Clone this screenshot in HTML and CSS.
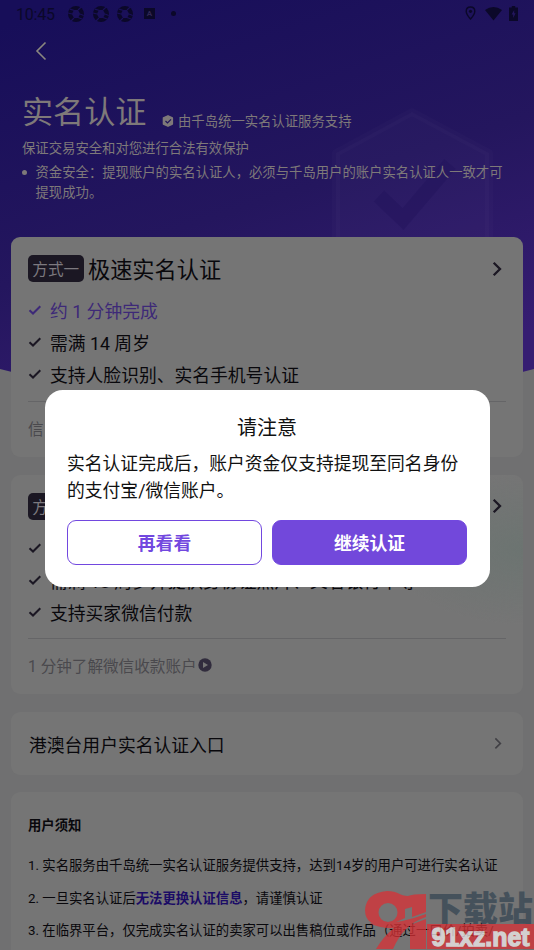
FILE: index.html
```html
<!DOCTYPE html>
<html lang="zh-CN">
<head>
<meta charset="utf-8">
<title>实名认证</title>
<link rel="stylesheet" href="styles.css">
</head>
<body>
<svg class="symbols" aria-hidden="true">
  <symbol id="check" viewBox="0 0 14 12"><path d="M1.5 6.2 5 9.5 12.3 2.3"/></symbol>
  <symbol id="next" viewBox="0 0 10 16"><path d="M1.7 1.7 8 8 1.7 14.3"/></symbol>
  <symbol id="aperture" viewBox="0 0 16 16"><circle cx="8" cy="8" r="8" fill="currentColor"/><path d="M6 4H10L12.2 8 10 12H6L3.8 8Z" fill="#1a1059"/><path d="M6.5 4.5 2 3.2M10 4 13.5 .8M12 8 15.8 9.5M10 11.5 14 13M6 12 3 15M4 8 0 7" stroke="#1a1059" stroke-width="1.2"/></symbol>
</svg>
<div class="screen">
  <svg class="backdrop" viewBox="0 0 534 410" aria-hidden="true">
    <defs><linearGradient id="sky" gradientUnits="userSpaceOnUse" x1="80" y1="0" x2="220" y2="430"><stop offset="0" stop-color="#170e59"/><stop offset=".55" stop-color="#24165e"/><stop offset="1" stop-color="#361d72"/></linearGradient></defs>
    <path fill="url(#sky)" d="M0 0H534V369Q267 440 0 369Z"/>
    <path d="M412 112 489 153V245H336V153Z" fill="#fff" fill-opacity=".018" stroke="#fff" stroke-opacity=".015" stroke-width="8" stroke-linejoin="round"/>
    <path d="m379 196 24 23 47-55" fill="none" stroke="#20125b" stroke-opacity=".4" stroke-width="15"/>
  </svg>
  <header class="status">
    <span class="clock">10:45</span>
    <svg class="ap"><use href="#aperture"/></svg><svg class="ap"><use href="#aperture"/></svg><svg class="ap"><use href="#aperture"/></svg>
    <span class="square">A</span><span class="dot"></span>
    <span class="system">
      <svg width="11" height="15" viewBox="0 0 11 15"><path d="M5.5 1C3 1 1.2 2.8 1.2 5.2 1.2 8.2 5.5 13 5.5 13S9.8 8.2 9.8 5.2C9.8 2.8 8 1 5.5 1Z" fill="none" stroke="currentColor" stroke-width="1.4"/><circle cx="5.5" cy="5.3" r="1.6" fill="currentColor"/></svg>
      <svg width="17" height="14" viewBox="0 0 17 14"><path d="M0 3Q8.5-3 17 3L8.5 13.5Z" fill="currentColor"/></svg>
      <svg width="9" height="15" viewBox="0 0 9 15"><path d="M2.8 0H6.2V1.5H9V15H0V1.5H2.8Z" fill="currentColor"/><path d="M5.2 4 2.6 8.6H4.2V12L6.6 7.3H5.2Z" fill="#24165e"/></svg>
    </span>
  </header>
  <nav class="nav"><svg width="12" height="20" viewBox="0 0 12 20"><path d="M10.5 1.5 2 10 10.5 18.5" fill="none" stroke="currentColor" stroke-width="1.6"/></svg></nav>
  <section class="intro">
    <div class="heading"><h1>实名认证</h1>
      <svg width="12" height="12" viewBox="0 0 12 12"><path d="M6 .8 10.4 3V9L6 11.2 1.4 9V3Z" fill="currentColor" stroke="currentColor" stroke-width="1.4" stroke-linejoin="round"/><path d="m3.5 6 2 2 3.5-3.6" fill="none" stroke="#1e1259" stroke-width="1.2"/></svg>
      <span>由千岛统一实名认证服务支持</span></div>
    <p>保证交易安全和对您进行合法有效保护</p>
    <ul><li>资金安全：提现账户的实名认证人，必须与千岛用户的账户实名认证人一致才可提现成功。</li></ul>
  </section>
  <main class="cards">
    <section class="card method">
      <div class="method-head"><span class="badge">方式一</span><h2>极速实名认证</h2><svg class="next"><use href="#next"/></svg></div>
      <ul class="checks">
        <li class="accent"><svg><use href="#check"/></svg>约 1 分钟完成</li>
        <li><svg><use href="#check"/></svg>需满 14 周岁</li>
        <li><svg><use href="#check"/></svg>支持人脸识别、实名手机号认证</li>
      </ul>
      <div class="foot">信</div>
    </section>
    <section class="card method wechat">
      <div class="method-head"><span class="badge">方式二</span><svg class="next"><use href="#next"/></svg></div>
      <ul class="checks">
        <li><svg><use href="#check"/></svg></li>
        <li><svg><use href="#check"/></svg>需满 18 周岁并提供身份证照片、父者银行卡等</li>
        <li><svg><use href="#check"/></svg>支持买家微信付款</li>
      </ul>
      <div class="foot">1 分钟了解微信收款账户<svg width="14" height="14" viewBox="0 0 14 14"><circle cx="7" cy="7" r="6.7" fill="#312c3d"/><path d="M5 4 10 7 5 10Z" fill="#757575"/></svg></div>
    </section>
    <section class="card entry"><span>港澳台用户实名认证入口</span><svg class="next"><use href="#next"/></svg></section>
    <section class="card notice">
      <h3>用户须知</h3>
      <p>1. 实名服务由千岛统一实名认证服务提供支持，达到14岁的用户可进行实名认证</p>
      <p>2. 一旦实名认证后<b>无法更换认证信息</b>，请谨慎认证</p>
      <p>3. 在临界平台，仅完成实名认证的卖家可以出售稿位或作品（通过一口价/拍卖/</p>
    </section>
  </main>
  <div class="overlay">
    <div class="dialog" role="dialog">
      <h2>请注意</h2>
      <p>实名认证完成后，账户资金仅支持提现至同名身份的支付宝/微信账户。</p>
      <div class="actions"><button class="outline">再看看</button><button class="solid">继续认证</button></div>
    </div>
  </div>
  <div class="watermark">
    <svg width="63" height="60" viewBox="0 0 63 60" aria-hidden="true"><path fill="currentColor" fill-rule="evenodd" d="M23 1C34 1 36 6 44 6Q48 4 62 4V22L48 27V17L41 19V28Q31 33 22 36Q1 36 1 20Q2 3 23 1ZM24 13A9.5 9.5 0 1 0 24 32A9.5 9.5 0 1 0 24 13Z"/><path fill="currentColor" d="M5 33Q30 36 62 24V27Q40 34 29 59H12Q19 47 30 38Q17 39 5 33ZM46 35 62 29V59H46Z"/></svg>
    <div class="wm-words"><span class="wm-name">下载站</span><span class="wm-site"><svg width="107" height="25" viewBox="0 0 107 25"><text x="4.5" y="22" textLength="98" lengthAdjust="spacingAndGlyphs">91xz.net</text></svg></span></div>
  </div>
</div>
</body>
</html>
```
FILE: styles.css
```css
* { box-sizing: border-box; }
body { margin: 0; }
h1, h2, h3, p, ul { margin: 0; padding: 0; font-weight: 400; }
ul { list-style: none; }
svg { display: block; flex: none; }
.symbols { position: absolute; width: 0; height: 0; }
.screen {
  position: relative;
  width: 534px;
  height: 950px;
  overflow: hidden;
  background: #707071;
  color: #09080c;
  font-family: Roboto, "Noto Sans CJK SC", sans-serif;
}
.backdrop { position: absolute; top: 0; left: 0; width: 534px; height: 410px; }
.status, .nav, .intro, .cards { position: relative; }
.status { display: flex; align-items: center; height: 27px; padding: 0 15px 0 16px; color: #0b0829; }
.clock { width: 52px; padding-top: 1px; font-size: 16px; letter-spacing: -.2px; }
.ap { width: 16px; height: 16px; margin-right: 8.5px; }
.square { width: 11px; height: 11px; margin-left: 2.5px; background: #0b0829; color: #302653; font: bold 8px/11px Roboto, sans-serif; text-align: center; }
.dot { width: 5px; height: 5px; margin-left: 16px; border-radius: 50%; background: #0b0829; }
.system { display: flex; align-items: center; gap: 9px; margin-left: auto; margin-right: 1px; }
.system svg:last-child { margin-left: -2px; }
.nav { height: 48px; padding: 14px 0 0 35px; color: #8a877f; }
.intro { height: 162px; padding: 13px 22px 0; color: #7e7979; font-size: 13.35px; line-height: 20px; }
.heading { display: flex; align-items: flex-end; height: 48px; }
.heading h1 { width: 140px; height: 47px; font-size: 31.1px; line-height: 48px; }
.heading svg { margin-bottom: 9px; }
.heading span { margin: 0 0 4px 4px; }
.intro p { margin-top: 3px; }
.intro li { position: relative; margin-top: 4px; padding-left: 13.5px; }
.intro li::before { content: ""; position: absolute; left: 0; top: 7px; width: 5px; height: 5px; border-radius: 50%; background: currentColor; }
.cards { display: flex; flex-direction: column; gap: 17.8px; padding: 0 11px; }
.card { border-radius: 9px; background: #757575; padding: 0 17px; flex: none; }
.method { height: 219.8px; padding-top: 14px; }
.wechat { background: radial-gradient(ellipse 135px 75px at 100% 34%, #6c7471, transparent), #757575; }
.method-head { display: flex; align-items: center; height: 35px; }
.badge { width: 55.5px; height: 27px; border-radius: 5px; background: #1b1723; color: #7c797f; font-size: 15.6px; line-height: 30px; text-align: center; }
.method-head h2 { margin-left: 4.5px; padding-top: 3px; font-size: 22.2px; line-height: 35px; }
.next { width: 10px; height: 16px; margin-left: auto; margin-right: 4px; fill: none; stroke: #1b1723; stroke-width: 2.3; }
.checks { margin-top: 8px; }
.checks li { display: flex; align-items: center; height: 32.2px; font-size: 17.8px; white-space: nowrap; }
.checks svg { width: 14px; height: 12px; margin-right: 8px; fill: none; stroke: #1b1723; stroke-width: 2; }
.checks .accent { color: #3d2978; }
.checks .accent svg { stroke: #3d2978; }
.foot { display: flex; align-items: center; gap: 1px; height: 53px; margin-top: 10px; border-top: 1px solid #656567; color: #4a494d; font-size: 15.6px; }
.entry { display: flex; align-items: center; height: 62.5px; padding-left: 18px; padding-top: 2px; font-size: 17.8px; }
.entry .next { width: 8px; height: 12.8px; margin-bottom: 2px; stroke: #414045; stroke-width: 2; }
.notice { height: 180px; padding-top: 24px; font-size: 13.35px; line-height: 20px; white-space: nowrap; }
.notice h3 { margin-bottom: 20px; font-size: 13.35px; font-weight: 700; }
.notice p { margin-bottom: 12.1px; }
.notice b { color: #1b0c66; }
.overlay { position: absolute; inset: 0; display: flex; align-items: flex-start; justify-content: center; padding-top: 389.5px; }
.dialog { width: 445px; height: 197.5px; padding: 24.5px 22.5px 0; border-radius: 17.8px; background: #fff; color: #111; font-size: 17.8px; line-height: 26.7px; }
.dialog h2 { font-size: 20px; line-height: 28px; text-align: center; }
.dialog p { margin-top: 9px; word-break: break-all; }
.actions { display: flex; gap: 10px; margin: 15.5px 0 0; }
.actions button { flex: 1; height: 45px; padding: 0; border: 1.5px solid #7248df; border-radius: 9px; font: 700 17.8px Roboto, "Noto Sans CJK SC", sans-serif; }
.outline { background: #fff; color: #7248df; }
.solid { background: #7248db; color: #fff; }
.watermark { position: absolute; left: 364px; top: 890px; display: flex; width: 170px; height: 60px; opacity: .76; color: #d83236; }
.wm-words { display: flex; flex-direction: column; width: 107px; }
.wm-name { height: 34px; margin-left: 1px; color: #374754; font: 900 35px/33px "Noto Sans CJK SC", sans-serif; white-space: nowrap; }
.wm-site { width: 107px; height: 25px; background: #d83236; }
.wm-site text { font: bold 25px "Liberation Sans Narrow", "Liberation Sans", sans-serif; fill: #f2eded; stroke: #f2eded; stroke-width: 1.3px; }
```
